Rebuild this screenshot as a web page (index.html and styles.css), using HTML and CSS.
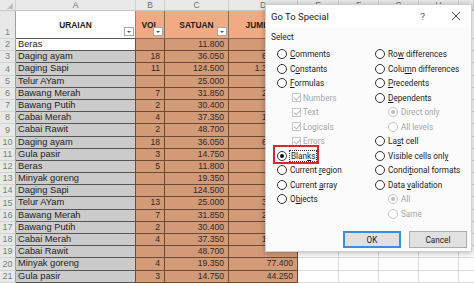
FILE: index.html
```html
<!DOCTYPE html>
<html lang="id">
<head>
    <meta charset="UTF-8">
    <meta name="viewport" content="width=device-width, initial-scale=1.0">
    <title>Go To Special</title>
    <link rel="stylesheet" href="styles.css">
</head>
<body>
    <div class="sheet">
        <!-- kolom huruf -->
        <div class="colhead">
            <span class="corner"></span>
            <span>A</span><span>B</span><span>C</span><span>D</span>
            <span>E</span><span>F</span><span>G</span><span>H</span><span></span>
        </div>

        <!-- baris judul -->
        <div class="row title-row">
            <span class="rn">1</span>
            <span class="th th-a">URAIAN<i class="filter"></i></span>
            <span class="th th-o">VOL<i class="filter"></i></span>
            <span class="th th-o">SATUAN<i class="filter"></i></span>
            <span class="th th-o">JUMLAH<i class="filter"></i></span>
            <span class="rest"></span>
        </div>

        <div class="row"><span class="rn">2</span><span class="a active">Beras</span><span class="o"></span><span class="o">11.800</span><span class="o"></span><span class="rest"></span></div>
        <div class="row"><span class="rn">3</span><span class="a">Daging ayam</span><span class="o">18</span><span class="o">36.050</span><span class="o">648.900</span><span class="rest"></span></div>
        <div class="row"><span class="rn">4</span><span class="a">Daging Sapi</span><span class="o">11</span><span class="o">124.500</span><span class="o">1.369.500</span><span class="rest"></span></div>
        <div class="row"><span class="rn">5</span><span class="a">Telur AYam</span><span class="o"></span><span class="o">25.000</span><span class="o"></span><span class="rest"></span></div>
        <div class="row"><span class="rn">6</span><span class="a">Bawang Merah</span><span class="o">7</span><span class="o">31.850</span><span class="o">222.950</span><span class="rest"></span></div>
        <div class="row"><span class="rn">7</span><span class="a">Bawang Putih</span><span class="o">2</span><span class="o">30.400</span><span class="o">60.800</span><span class="rest"></span></div>
        <div class="row"><span class="rn">8</span><span class="a">Cabai Merah</span><span class="o">4</span><span class="o">37.350</span><span class="o">149.400</span><span class="rest"></span></div>
        <div class="row"><span class="rn">9</span><span class="a">Cabai Rawit</span><span class="o">2</span><span class="o">48.700</span><span class="o">97.400</span><span class="rest"></span></div>
        <div class="row"><span class="rn">10</span><span class="a">Daging ayam</span><span class="o">18</span><span class="o">36.050</span><span class="o">648.900</span><span class="rest"></span></div>
        <div class="row"><span class="rn">11</span><span class="a">Gula pasir</span><span class="o">3</span><span class="o">14.750</span><span class="o">44.250</span><span class="rest"></span></div>
        <div class="row"><span class="rn">12</span><span class="a">Beras</span><span class="o">5</span><span class="o">11.800</span><span class="o">59.000</span><span class="rest"></span></div>
        <div class="row"><span class="rn">13</span><span class="a">Minyak goreng</span><span class="o"></span><span class="o">19.350</span><span class="o"></span><span class="rest"></span></div>
        <div class="row"><span class="rn">14</span><span class="a">Daging Sapi</span><span class="o"></span><span class="o">124.500</span><span class="o"></span><span class="rest"></span></div>
        <div class="row"><span class="rn">15</span><span class="a">Telur AYam</span><span class="o">13</span><span class="o">25.000</span><span class="o">325.000</span><span class="rest"></span></div>
        <div class="row"><span class="rn">16</span><span class="a">Bawang Merah</span><span class="o">7</span><span class="o">31.850</span><span class="o">222.950</span><span class="rest"></span></div>
        <div class="row"><span class="rn">17</span><span class="a">Bawang Putih</span><span class="o">2</span><span class="o">30.400</span><span class="o">60.800</span><span class="rest"></span></div>
        <div class="row"><span class="rn">18</span><span class="a">Cabai Merah</span><span class="o">4</span><span class="o">37.350</span><span class="o">149.400</span><span class="rest"></span></div>
        <div class="row"><span class="rn">19</span><span class="a">Cabai Rawit</span><span class="o"></span><span class="o">48.700</span><span class="o"></span><span class="rest"></span></div>
        <div class="row"><span class="rn">20</span><span class="a">Minyak goreng</span><span class="o">4</span><span class="o">19.350</span><span class="o">77.400</span><span class="rest"></span></div>
        <div class="row"><span class="rn">21</span><span class="a">Gula pasir</span><span class="o">3</span><span class="o">14.750</span><span class="o">44.250</span><span class="rest"></span></div>
    </div>

    <!-- dialog Go To Special -->
    <div class="dialog">
        <div class="dlg-title">
            <span class="dlg-name">Go To Special</span>
            <span class="dlg-help">?</span>
            <svg class="dlg-close" width="10" height="10" viewBox="0 0 10 10">
                <path d="M1 1 L9 9 M9 1 L1 9" stroke="#444" stroke-width="1" fill="none"/>
            </svg>
        </div>
        <div class="dlg-body">
            <div class="dlg-label">Select</div>
            <div class="options">
                <div class="opt-col">
                    <div class="opt"><span class="radio"></span><span><u>C</u>omments</span></div>
                    <div class="opt"><span class="radio"></span><span>C<u>o</u>nstants</span></div>
                    <div class="opt"><span class="radio"></span><span><u>F</u>ormulas</span></div>
                    <div class="opt sub off"><span class="check"></span><span>Numbers</span></div>
                    <div class="opt sub off"><span class="check"></span><span>Text</span></div>
                    <div class="opt sub off"><span class="check"></span><span>Logicals</span></div>
                    <div class="opt sub off"><span class="check"></span><span>Errors</span></div>
                    <div class="opt"><span class="radio on"></span><span class="focus">Blan<u>k</u>s</span></div>
                    <div class="opt"><span class="radio"></span><span>Current <u>r</u>egion</span></div>
                    <div class="opt"><span class="radio"></span><span>Current <u>a</u>rray</span></div>
                    <div class="opt"><span class="radio"></span><span>O<u>b</u>jects</span></div>
                </div>
                <div class="opt-col">
                    <div class="opt"><span class="radio"></span><span>Ro<u>w</u> differences</span></div>
                    <div class="opt"><span class="radio"></span><span>Colu<u>m</u>n differences</span></div>
                    <div class="opt"><span class="radio"></span><span><u>P</u>recedents</span></div>
                    <div class="opt"><span class="radio"></span><span><u>D</u>ependents</span></div>
                    <div class="opt sub-r off"><span class="radio on"></span><span>Direct only</span></div>
                    <div class="opt sub-r off"><span class="radio"></span><span>All levels</span></div>
                    <div class="opt"><span class="radio"></span><span>La<u>s</u>t cell</span></div>
                    <div class="opt"><span class="radio"></span><span>Visible cells onl<u>y</u></span></div>
                    <div class="opt"><span class="radio"></span><span>Condi<u>t</u>ional formats</span></div>
                    <div class="opt"><span class="radio"></span><span>Data <u>v</u>alidation</span></div>
                    <div class="opt sub-r off"><span class="radio on"></span><span>All</span></div>
                    <div class="opt sub-r off"><span class="radio"></span><span>Same</span></div>
                </div>
            </div>
            <div class="buttons">
                <button class="btn btn-default">OK</button>
                <button class="btn">Cancel</button>
            </div>
        </div>
        <div class="mark"></div>
    </div>
</body>
</html>
```

FILE: styles.css
```css
/* Dasar */
body {
    margin: 0;
    width: 474px;
    height: 283px;
    overflow: hidden;
    background: #ffffff;
    font-family: "Liberation Sans", Arial, sans-serif;
    position: relative;
}

* {
    box-sizing: border-box;
}

/* Lembar kerja */
.sheet {
    width: 474px;
}

.colhead {
    display: grid;
    grid-template-columns: 16px 120px 29px 64px 69px 41px 40px 40px 40px 1fr;
    height: 11px;
    background: #e9e9e9;
    border-bottom: 1px solid #c6c6c6;
}

.colhead span {
    font-size: 8.5px;
    line-height: 10px;
    color: #707070;
    text-align: center;
    border-right: 1px solid #d0d0d0;
}

.colhead .corner {
    position: relative;
}

.colhead .corner::after {
    content: "";
    position: absolute;
    right: 2px;
    bottom: 1px;
    border-left: 6px solid transparent;
    border-bottom: 6px solid #bdbdbd;
}

.row {
    display: grid;
    grid-template-columns: 16px 120px 29px 64px 69px 1fr;
    height: 12.2px;
}

.title-row {
    height: 28px;
}

.rn {
    background: #e8e8e8;
    border-bottom: 1px solid #d2d2d2;
    border-right: 1px solid #7fb38d;
    color: #6f8675;
    font-size: 9px;
    text-align: center;
    display: flex;
    align-items: flex-end;
    justify-content: center;
    line-height: 11px;
}

.a, .o {
    font-size: 9.3px;
    line-height: 11px;
    color: #1d1d1d;
    white-space: nowrap;
    overflow: hidden;
    border-right: 1px solid #555;
    border-bottom: 1px solid #555;
}

.a {
    background: #cbcbcb;
    padding-left: 2px;
}

.a.active {
    background: #ffffff;
}

.o {
    background: #d39a78;
    text-align: right;
    padding-right: 4px;
    font-size: 8.6px;
    color: #2a2a2a;
    border-color: #6b4a38;
}

.th {
    position: relative;
    display: flex;
    align-items: center;
    justify-content: center;
    font-size: 8.4px;
    font-weight: bold;
    color: #1a1a1a;
    border-right: 1px solid #8a8a8a;
    border-bottom: 1px solid #555;
}

.th-a {
    background: #ffffff;
}

.th-o {
    background: #f1ab84;
    border-color: #8a6650;
}

.filter {
    position: absolute;
    right: 1px;
    bottom: 2px;
    width: 10px;
    height: 9px;
    background: #ffffff;
    border: 1px solid #a8a8a8;
}

.filter::after {
    content: "";
    position: absolute;
    left: 2px;
    top: 3px;
    border-left: 2px solid transparent;
    border-right: 2px solid transparent;
    border-top: 2px solid #555;
}

.rest {
    background: #ffffff repeating-linear-gradient(to right, transparent 0 39px, #dadada 39px 40px);
    background-position: 1px 0;
    border-bottom: 1px solid #dadada;
}

/* Dialog */
.dialog {
    position: absolute;
    left: 265px;
    top: 4px;
    width: 207px;
    height: 248px;
    background: #fbfbfb;
    border: 1px solid #cfcfcf;
    box-shadow: 0 1px 6px rgba(0, 0, 0, 0.3);
    font-family: Roboto, "Liberation Sans", sans-serif;
    color: #1b1b1b;
}

.dlg-title {
    display: flex;
    align-items: center;
    height: 22px;
    padding: 0 10px 0 5px;
    background: #ffffff;
}

.dlg-name {
    flex: 1;
    font-size: 9.5px;
}

.dlg-help {
    font-size: 9.5px;
    color: #555;
    margin-right: 26px;
}

.dlg-body {
    padding: 4px 4px 0 11px;
}

.dlg-label {
    height: 12px;
    line-height: 12px;
    font-size: 8.3px;
    margin-left: -6px;
}

.options {
    display: grid;
    grid-template-columns: 98px 1fr;
    margin-top: 4px;
}

.opt {
    display: flex;
    align-items: center;
    gap: 3px;
    height: 14.5px;
    font-size: 8.2px;
    white-space: nowrap;
}

.opt u {
    text-decoration-thickness: 1px;
    text-underline-offset: 1px;
}

.sub {
    padding-left: 15px;
    gap: 2px;
}

.sub-r {
    padding-left: 13px;
}

.off {
    color: #a7a7a7;
}

.radio {
    width: 10px;
    height: 10px;
    border: 1px solid #333;
    border-radius: 50%;
    background: #ffffff;
    display: flex;
    align-items: center;
    justify-content: center;
    flex: none;
}

.radio.on::after {
    content: "";
    width: 4px;
    height: 4px;
    border-radius: 50%;
    background: #111;
}

.off .radio {
    border-color: #c4c4c4;
}

.off .radio.on::after {
    background: #bdbdbd;
}

.check {
    position: relative;
    width: 9px;
    height: 9px;
    border: 1px solid #c8c8c8;
    background: #ffffff;
    flex: none;
}

.check::after {
    content: "";
    position: absolute;
    left: 2px;
    top: 0px;
    width: 3px;
    height: 5px;
    border-right: 1px solid #b8b8b8;
    border-bottom: 1px solid #b8b8b8;
    transform: rotate(40deg);
}

.focus {
    outline: 1px dotted #333;
    outline-offset: 0;
    padding: 0 1px;
}

.buttons {
    display: flex;
    justify-content: flex-end;
    gap: 8px;
    margin-top: 10px;
}

.btn {
    width: 58px;
    height: 17px;
    padding: 0;
    background: #e1e1e1;
    border: 1px solid #adadad;
    font-family: Roboto, "Liberation Sans", sans-serif;
    font-size: 8.2px;
    color: #1b1b1b;
}

.btn-default {
    border: 2px solid #3c8fd8;
}

/* kotak merah penanda */
.mark {
    position: absolute;
    left: 7px;
    top: 140px;
    width: 46px;
    height: 19px;
    border: 2px solid #d42a31;
}
```
